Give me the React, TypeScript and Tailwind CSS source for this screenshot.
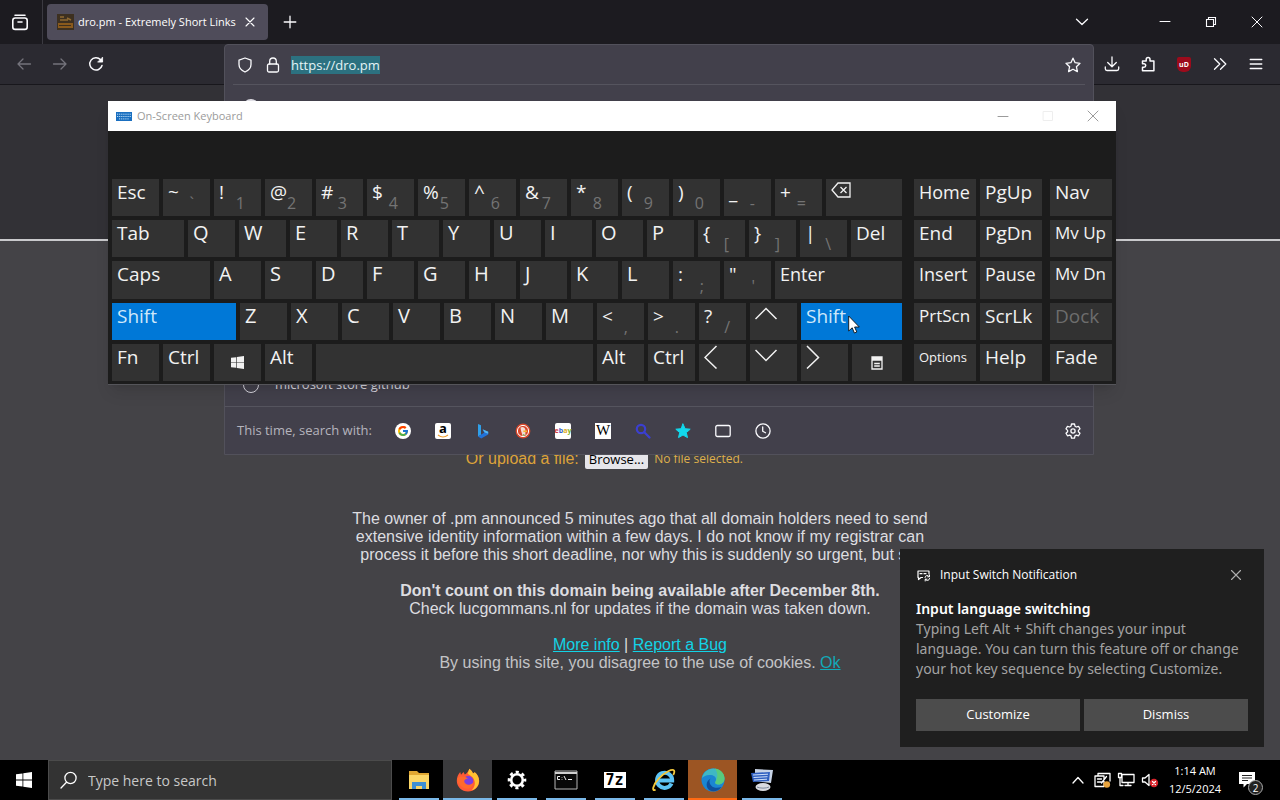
import React from "react";
import { FcGoogle } from "react-icons/fc";

type IconProps = { className?: string; children: React.ReactNode; box?: string };

function Icon({ className = "size-4", children, box = "0 0 16 16" }: IconProps) {
  return (
    <svg
      viewBox={box}
      className={`${className} shrink-0`}
      fill="none"
      stroke="currentColor"
      strokeWidth="1.3"
      strokeLinecap="round"
      strokeLinejoin="round"
      aria-hidden="true"
    >
      {children}
    </svg>
  );
}

const toolButton = "flex h-8 w-9 items-center justify-center";

/* ---------- Browser ---------- */

function TabStrip() {
  return (
    <div className="flex h-11 items-center bg-[#1c1b20]">
      <button aria-label="Firefox View" className="flex h-11 w-[43px] items-center justify-center border-r border-[#3b3a41] pr-[2px]">
        <Icon className="size-5" box="0 0 20 20">
          <g strokeWidth="1.6">
            <rect x="2.8" y="6" width="14.4" height="11.4" rx="2.4" />
            <path d="M5 3.2h10M8 10h4" />
          </g>
        </Icon>
      </button>
      <div className="ml-1 flex h-9 w-[221px] items-center rounded bg-[#4f4c5a] px-2 text-white">
        <svg viewBox="0 0 17 16" className="ml-[2px] mr-1 h-4 w-[17px] shrink-0" aria-hidden="true">
          <rect width="17" height="16" fill="#3d3020" />
          <path d="M1 9h15v5H1z" fill="#8a5a1c" />
          <path d="M3 3h4M3 6h8M10 4l4 2" stroke="#8f6a32" strokeWidth="1.4" />
          <path d="M2 11.5h12" stroke="#3d3020" strokeWidth="1" />
        </svg>
        <span className="flex-1 whitespace-nowrap text-[11px]">dro.pm - Extremely Short Links</span>
        <button aria-label="Close tab" className="mr-[2px] flex w-4 shrink-0 items-center justify-center">
          <Icon className="size-3" box="0 0 12 12">
            <path d="M2 2l8 8M10 2l-8 8" strokeWidth="1.1" />
          </Icon>
        </button>
      </div>
      <button aria-label="New tab" className="ml-1 flex size-9 items-center justify-center">
        <Icon>
          <path d="M8 2.2v11.6M2.2 8h11.6" />
        </Icon>
      </button>
      <div className="flex-1" />
      <button aria-label="List all tabs" className="flex size-9 items-center justify-center">
        <Icon>
          <path d="M2.5 5.3l5.5 5.2 5.5-5.2" />
        </Icon>
      </button>
      <div className="ml-[42px] flex">
        <button aria-label="Minimize" className="flex h-11 w-[46px] items-center justify-center">
          <Icon className="size-3" box="0 0 12 12">
            <path d="M1 5.5h10" strokeWidth="1" />
          </Icon>
        </button>
        <button aria-label="Restore" className="flex h-11 w-[46px] items-center justify-center">
          <Icon className="size-3" box="0 0 12 12">
            <path d="M1.5 3.5h7v7h-7zM3.5 3.5v-2h7v7h-2" strokeWidth="1.1" strokeLinejoin="miter" />
          </Icon>
        </button>
        <button aria-label="Close" className="flex h-11 w-[46px] items-center justify-center">
          <Icon className="size-3" box="0 0 12 12">
            <path d="M1 1l10 10M11 1L1 11" strokeWidth="1" />
          </Icon>
        </button>
      </div>
    </div>
  );
}

function EngineRow() {
  const slot = "flex size-5 items-center justify-center";
  return (
    <div className="flex h-12 items-center border-t border-[#55545e] pl-3 pr-[10px]">
      <span className="w-[156px] text-[13px] text-[#b5b4bd]">This time, search with:</span>
      <div className="flex flex-1 gap-5">
        <button aria-label="Google" className={slot}>
          <span className="flex size-4 items-center justify-center rounded-full bg-white">
            <FcGoogle className="size-3" />
          </span>
        </button>
        <button aria-label="Amazon" className={slot}>
          <span className="flex size-4 flex-col items-center rounded-xs bg-white text-black">
            <span className="h-[11px] text-[13px] leading-[10px] font-bold">a</span>
            <svg viewBox="0 0 12 4" className="h-1 w-3" aria-hidden="true">
              <path d="M1 1c3 2.4 7 2.4 10 0" stroke="#f0a030" fill="none" strokeWidth="1.2" />
            </svg>
          </span>
        </button>
        <button aria-label="Bing" className={slot}>
          <svg viewBox="0 0 16 16" className="size-4" aria-hidden="true">
            <path d="M3 1l3 1.2v9.6L3 13.6z" fill="#2f9fe8" />
            <path d="M3 13.4l3.2-2 3-1.6-1.6-3.4 5.6 2.4v2.6L6.2 15.4z" fill="#2272d8" />
            <path d="M7.6 6.2l5.6 2.5v2.1l-3.4-1.2z" fill="#56b8f0" />
          </svg>
        </button>
        <button aria-label="DuckDuckGo" className={slot}>
          <svg viewBox="0 0 16 16" className="size-4" aria-hidden="true">
            <circle cx="8" cy="8" r="7.4" fill="#d9482b" />
            <circle cx="8" cy="8" r="5.6" fill="none" stroke="#fff" strokeWidth="1" />
            <path d="M5.5 4.5C7.500 3 10.200 4.500 10.400 7v5L7.600 13C7 10 5.800 8 5.500 4.500z" fill="#f3dcd4" />
            <path d="M8.300 7.500h3.800v1.600H8.300z" fill="#f5b731" />
            <path d="M8 11l3.200 1.600H7.800z" fill="#5eb146" />
          </svg>
        </button>
        <button aria-label="eBay" className={slot}>
          <span className="flex size-4 items-center justify-center rounded-xs bg-white text-[7px] leading-none font-bold">
            <span className="text-[#d33a3a]">e</span>
            <span className="text-[#3c62c9]">b</span>
            <span className="text-[#e0a920]">a</span>
            <span className="text-[#7fb32a]">y</span>
          </span>
        </button>
        <button aria-label="Wikipedia" className={slot}>
          <span className="flex size-4 items-center justify-center overflow-hidden bg-white font-['Liberation_Serif',serif] text-[15px] leading-none text-black">
            W
          </span>
        </button>
        <button aria-label="Site search" className={`${slot} text-[#3b3fd0]`}>
          <Icon>
            <g strokeWidth="2.200">
              <circle cx="6" cy="6" r="4.200" />
              <path d="M9.300 9.300l5.200 5.200" />
            </g>
          </Icon>
        </button>
        <button aria-label="Bookmarks" className={`${slot} text-[#12d8ec]`}>
          <Icon>
            <path
              d="M8 1l2.100 4.700 5.100.5-3.900 3.400 1.200 5L8 12l-4.500 2.600 1.200-5L.8 6.200l5.100-.5z"
              fill="currentColor"
              strokeWidth="1"
            />
          </Icon>
        </button>
        <button aria-label="Tabs" className={slot}>
          <Icon>
            <rect x=".8" y="2.500" width="14.400" height="11" rx="1.600" />
          </Icon>
        </button>
        <button aria-label="History" className={slot}>
          <Icon>
            <circle cx="8" cy="8" r="7.100" />
            <path d="M7.700 4v4.300l2.800 1.500" />
          </Icon>
        </button>
      </div>
      <button aria-label="Search settings" className={slot}>
        <Icon>
          <path d="M6.500 1h3l.5 2.200 1.400.8 2.100-.7 1.500 2.600-1.600 1.500v1.300l1.600 1.500-1.500 2.600-2.100-.7-1.400.8-.5 2.200h-3L6 12.900l-1.400-.8-2.100.7L1 10.200l1.600-1.500V7.400L1 5.900l1.500-2.600 2.100.7L6 3.200z" />
          <circle cx="8" cy="8" r="2.100" />
        </Icon>
      </button>
    </div>
  );
}

function UrlBar() {
  return (
    <div className="relative h-10 flex-1">
      <div className="absolute inset-x-0 top-0 z-10 flex flex-col rounded-t-sm border border-[#52515b] bg-[#42404b]">
        <div className="flex h-[39px] items-center pl-1 pr-[10px]">
          <button aria-label="Tracking protection" className="flex w-8 items-center justify-center">
            <Icon>
              <path d="M8 1l6 2.200v4.200c0 3.600-2.600 6-6 7.600-3.400-1.600-6-4-6-7.600V3.200z" />
            </Icon>
          </button>
          <button aria-label="Site information" className="flex w-6 items-center justify-center">
            <Icon>
              <rect x="2.500" y="7" width="11" height="8" rx="1.500" />
              <path d="M4.700 7V4.300a3.300 3.300 0 0 1 6.600 0V7" />
            </Icon>
          </button>
          <div className="flex flex-1 pl-[6px]">
            <span className="bg-[#2c7180] text-[13px] leading-[18px] text-[#e4f4f6]">https://dro.pm</span>
          </div>
          <button aria-label="Bookmark this page" className="flex size-5 items-center justify-center">
            <Icon>
              <path d="M8 1.200l2.100 4.500 4.900.6-3.600 3.400 1 4.900L8 12.200l-4.400 2.400 1-4.900L1 6.300l4.900-.6z" />
            </Icon>
          </button>
        </div>
        <ul className="mx-2 flex h-[322px] flex-col justify-between border-t border-[#55545e] pt-[14px] pb-[13px] text-[13px]">
          <li className="flex h-4 items-center gap-4 pl-[10px]">
            <span className="size-4 rounded-full border-2 border-[#e0dfe6] bg-[#e0dfe6]" />
          </li>
          <li className="flex h-4 items-center gap-4 pl-[10px] text-[#d5d4dc]">
            <span className="size-4 rounded-full border border-[#d5d4dc]" />
            <span>microsoft store github</span>
          </li>
        </ul>
        <EngineRow />
      </div>
    </div>
  );
}

function Toolbar() {
  return (
    <div className="flex h-[41px] items-start border-b border-[#18171c] bg-[#2b2a31]">
      <div className="flex h-10 w-56 items-center pl-[6px]">
        <button aria-label="Back" className={`${toolButton} text-[#74737b]`}>
          <Icon>
            <path d="M14.500 8H2M7 3L2 8l5 5" />
          </Icon>
        </button>
        <button aria-label="Forward" className={`${toolButton} text-[#74737b]`}>
          <Icon>
            <path d="M1.500 8H14M9 3l5 5-5 5" />
          </Icon>
        </button>
        <button aria-label="Reload" className={toolButton}>
          <Icon>
            <path d="M14 9.500A6.200 6.200 0 1 1 12.600 3.700L14 5.300" strokeWidth="1.500" />
            <path d="M14.600 1.500v4.600H10z" fill="currentColor" strokeWidth=".8" />
          </Icon>
        </button>
      </div>
      <UrlBar />
      <div className="flex h-10 items-center pr-[6px]">
        <button aria-label="Downloads" className={toolButton}>
          <Icon>
            <path d="M8 1v9.500M3.700 6.500L8 10.700l4.300-4.200M1.300 11v1.800c0 1 .7 1.700 1.700 1.700h10c1 0 1.700-.7 1.700-1.700V11" />
          </Icon>
        </button>
        <button aria-label="Extensions" className={toolButton}>
          <Icon>
            <path
              d="M2.500 5h3.700V3.400a1.900 1.900 0 0 1 3.800 0V5h3.900v9.800H2.500v-3.600H4a1.700 1.700 0 0 0 0-3.400H2.500z"
              strokeWidth="1.500"
            />
          </Icon>
        </button>
        <button aria-label="uBlock Origin" className={toolButton}>
          <span className="flex h-[15px] w-[14px] items-center justify-center rounded-t-xs rounded-b-md bg-[#9c0b1c] text-[7px] leading-none font-bold text-white">
            uD
          </span>
        </button>
        <button aria-label="More tools" className={toolButton}>
          <Icon>
            <path d="M2.500 2.700L7.800 8l-5.300 5.300M8.500 2.700L13.800 8l-5.300 5.300" />
          </Icon>
        </button>
        <button aria-label="Application menu" className={toolButton}>
          <Icon>
            <path d="M2.200 3.500h11.600M2.200 8h11.600M2.200 12.500h11.600" />
          </Icon>
        </button>
      </div>
    </div>
  );
}

function SitePage() {
  return (
    <main className="flex flex-1 flex-col bg-[#444347] font-['Liberation_Sans',Arial,sans-serif] text-[16px] leading-[18px] text-[#dddde0]">
      <header className="h-[156px] border-b-2 border-[#c9c9cc] bg-[#323136]" />
      <div className="flex items-center justify-center gap-[6px] pt-[208px]">
        <label htmlFor="upload" className="flex items-center gap-[6px] text-[#dda23a]">
          Or upload a file:
          <span className="h-5 rounded-xs bg-[#e6e5ea] px-1 font-['Open_Sans',sans-serif] text-[13px] leading-5 text-black">
            Browse...
          </span>
        </label>
        <input id="upload" type="file" className="sr-only" />
        <span className="w-40 font-['Open_Sans',sans-serif] text-[12px] text-[#dfb04c]">No file selected.</span>
      </div>
      <div className="flex flex-col items-center gap-[18px] pt-[41px] text-center">
        <p>
          The owner of .pm announced 5 minutes ago that all domain holders need to send
          <br />
          extensive identity information within a few days. I do not know if my registrar can
          <br />
          process it before this short deadline, nor why this is suddenly so urgent, but so.
        </p>
        <p>
          <strong>Don't count on this domain being available after December 8th.</strong>
          <br />
          Check lucgommans.nl for updates if the domain was taken down.
        </p>
        <div>
          <p>
            <a href="#info" className="text-[#12d3e6] underline">More info</a> |{" "}
            <a href="#bug" className="text-[#12d3e6] underline">Report a Bug</a>
          </p>
          <p className="text-[#c3c3c6]">
            By using this site, you disagree to the use of cookies.{" "}
            <a href="#ok" className="text-[#12a9b8] underline">Ok</a>
          </p>
        </div>
      </div>
    </main>
  );
}

/* ---------- On-screen keyboard ---------- */

type KeyDef = {
  label?: string;
  alt?: string;
  name?: string;
  icon?: React.ReactNode;
  center?: boolean;
  width?: string;
  active?: boolean;
  muted?: boolean;
  size?: string;
};

const k = (label: string, alt?: string): KeyDef => ({ label, alt });
const letters = (s: string): KeyDef[] => s.split("").map((c) => ({ label: c, size: "text-[20px]" }));
const grow = "flex-1";

const chevron = (d: string) => (
  <svg viewBox="0 0 24 24" className="size-6 shrink-0" fill="none" stroke="currentColor" strokeWidth="1.500" aria-hidden="true">
    <path d={d} />
  </svg>
);

function WindowsLogo({ className }: { className: string }) {
  return (
    <svg viewBox="0 0 16 16" className={className} fill="currentColor" aria-hidden="true">
      <path d="M0 2.300L6.500 1.400v6.200H0zM7.300 1.300L16 0v7.600H7.300zM0 8.400h6.500v6.200L0 13.700zM7.300 8.400H16V16l-8.700-1.300z" />
    </svg>
  );
}

const mainRows: KeyDef[][] = [
  [
    k("Esc"), k("~", "`"), k("!", "1"), k("@", "2"), k("#", "3"), k("$", "4"), k("%", "5"), k("^", "6"),
    k("&", "7"), k("*", "8"), k("(", "9"), k(")", "0"), k("_", "-"), k("+", "="),
    {
      name: "Backspace",
      width: grow,
      icon: (
        <svg viewBox="0 0 20 24" className="h-6 w-5" fill="none" stroke="currentColor" strokeWidth="1.300" aria-hidden="true">
          <path d="M7 3h12v14H7l-6-7zM9.500 7l6 6M15.500 7l-6 6" />
        </svg>
      ),
    },
  ],
  [{ label: "Tab", width: "w-[72px]" }, ...letters("QWERTYUIOP"), k("{", "["), k("}", "]"), k("|", "\\"), { label: "Del", width: grow }],
  [{ label: "Caps", width: "w-[98px]" }, ...letters("ASDFGHJKL"), k(":", ";"), k('"', "'"), { label: "Enter", width: grow, size: "text-[18px]" }],
  [
    { label: "Shift", width: "w-[124px]", active: true },
    ...letters("ZXCVBNM"), k("<", ","), k(">", "."), k("?", "/"),
    { name: "Up", icon: chevron("M.5 15L11 4.500 21.500 15") },
    { label: "Shift", width: grow, active: true },
  ],
  [
    k("Fn"), k("Ctrl"),
    { name: "Windows", center: true, icon: <WindowsLogo className="size-[13px]" /> },
    k("Alt"),
    { name: "Space", width: grow },
    k("Alt"), k("Ctrl"),
    { name: "Left", icon: chevron("M12.500 1L1 12.500 12.500 23.500") },
    { name: "Down", icon: chevron("M.5 5L11 15.500 21.500 5") },
    { name: "Right", icon: chevron("M1 1l11.500 11.500L1 23.500") },
    {
      name: "Menu",
      center: true,
      width: "w-[50px]",
      icon: (
        <svg viewBox="0 0 12 14" className="h-[14px] w-3" fill="none" stroke="currentColor" strokeWidth="1.300" aria-hidden="true">
          <path d="M1 1h10v12H1zM1 2.500h10M1 4h10M3.200 7.500h5.600M3.200 10h5.600" />
        </svg>
      ),
    },
  ],
];

const navKeys: KeyDef[] = [
  { label: "Home", size: "text-[18px]" }, k("PgUp"),
  k("End"), k("PgDn"),
  { label: "Insert", size: "text-[18px]" }, { label: "Pause", size: "text-[18px]" },
  { label: "PrtScn", size: "text-[17px]" }, k("ScrLk"),
  { label: "Options", size: "text-[13px]" }, k("Help"),
];

const paneKeys: KeyDef[] = [
  k("Nav"),
  { label: "Mv Up", size: "text-[17px]" },
  { label: "Mv Dn", size: "text-[17px]" },
  { label: "Dock", muted: true },
  k("Fade"),
];

function Key({ def }: { def: KeyDef }) {
  const tone = def.active ? "bg-[#0078d7] text-[#cfe8fa]" : def.muted ? "bg-[#323232] text-[#6d6d6d]" : "bg-[#323232] text-[#f2f2f2]";
  const place = def.center ? "items-center justify-center" : "items-start";
  return (
    <button
      aria-label={def.name}
      className={`flex h-full ${def.width ?? "w-[47px]"} ${place} ${tone} px-[5px] pt-px leading-6 ${def.size ?? "text-[19px]"}`}
    >
      {def.icon}
      {def.label && <span>{def.label}</span>}
      {def.alt && <span className="flex-1 self-end pr-[11px] text-right text-[16px] leading-[26px] text-[#747474]">{def.alt}</span>}
    </button>
  );
}

function KeyboardWindow() {
  return (
    <section
      aria-label="On-Screen Keyboard"
      className="absolute top-[101px] left-[108px] z-20 w-[1008px] border-b border-[#55555a] bg-[#1c1c1c] shadow-lg"
    >
      <div className="flex h-[30px] items-center bg-white pl-2 text-[#9b9b9b]">
        <svg viewBox="0 0 16 9" className="h-[9px] w-4" aria-hidden="true">
          <rect width="16" height="9" fill="#1a6fc0" />
          <path d="M1 2.200h14M1 4.500h14M3 6.900h10" stroke="#bcdcf5" strokeDasharray="1.200 .9" />
        </svg>
        <h2 className="flex-1 pl-[5px] text-[11px]">On-Screen Keyboard</h2>
        <button aria-label="Minimize keyboard" className="flex w-[45px] justify-center">
          <Icon className="size-3" box="0 0 12 12"><path d="M1 6.500h10" strokeWidth="1" /></Icon>
        </button>
        <button aria-label="Maximize keyboard" className="flex w-[45px] justify-center text-[#eeeeee]" disabled>
          <Icon className="size-3" box="0 0 12 12"><path d="M1.500 1.500h9v9h-9z" strokeWidth="1" /></Icon>
        </button>
        <button aria-label="Close keyboard" className="flex w-[46px] justify-center">
          <Icon className="size-3" box="0 0 12 12"><path d="M1 1l10 10M11 1L1 11" strokeWidth="1" /></Icon>
        </button>
      </div>
      <div className="flex h-[253px] px-1 pt-12 pb-[3px]">
        <div className="grid flex-1 auto-rows-fr gap-1">
          {mainRows.map((row, i) => (
            <div key={i} className="flex gap-1">
              {row.map((def, j) => <Key key={j} def={def} />)}
            </div>
          ))}
        </div>
        <div className="ml-3 grid w-32 auto-rows-fr grid-cols-2 gap-1">
          {navKeys.map((def) => <Key key={def.label} def={{ ...def, width: "w-full" }} />)}
        </div>
        <div className="ml-2 grid w-[62px] auto-rows-fr gap-1">
          {paneKeys.map((def) => <Key key={def.label} def={{ ...def, width: "w-full" }} />)}
        </div>
      </div>
    </section>
  );
}

/* ---------- Notification ---------- */

function Toast() {
  return (
    <aside className="absolute right-4 bottom-[53px] z-20 w-[364px] bg-[#1f1f1f] p-4 text-white">
      <div className="flex h-5 items-center">
        <Icon className="size-4">
          <g strokeWidth="1.200">
            <path d="M6.500 10.500H5l-2.500 2v-2h-.5V4h11v3M4 6.700h2M8 6.700h2" />
            <path d="M9 10.500a2.300 2.300 0 0 1 4.300-.8M13.600 11.500a2.300 2.300 0 0 1-4.200.9M13.500 8v1.800h-1.800M9.200 14v-1.800H11" strokeWidth="1" />
          </g>
        </Icon>
        <h2 className="flex-1 pl-2 text-[12px]">Input Switch Notification</h2>
        <button aria-label="Close notification" className="flex size-6 items-center justify-center text-[#b0b0b0]">
          <Icon className="size-3" box="0 0 12 12"><path d="M1.500 1.500l9 9M10.500 1.500l-9 9" strokeWidth="1.100" /></Icon>
        </button>
      </div>
      <div className="mt-[14px] font-['Noto_Sans',sans-serif] text-[14px] leading-5">
        <h3 className="font-semibold">Input language switching</h3>
        <p className="text-[#a3a3a3]">
          Typing Left Alt + Shift changes your input
          <br />
          language. You can turn this feature off or change
          <br />
          your hot key sequence by selecting Customize.
        </p>
      </div>
      <div className="mt-5 grid grid-cols-2 gap-1 text-[13px]">
        <button className="h-8 bg-[#4c4c4c]">Customize</button>
        <button className="h-8 bg-[#4c4c4c]">Dismiss</button>
      </div>
    </aside>
  );
}

/* ---------- Taskbar ---------- */

type TaskApp = { name: string; icon: React.ReactNode; tone?: string; bar?: string };

const apps: TaskApp[] = [
  {
    name: "File Explorer",
    icon: (
      <svg viewBox="0 0 24 24" className="size-6" aria-hidden="true">
        <path d="M2 3h8l2 2h10v16H2z" fill="#e0a732" />
        <path d="M2 7h20v14H2z" fill="#fbd667" />
        <path d="M5 21v-7h14v7h-4v-3H9v3z" fill="#3f8fd2" />
      </svg>
    ),
  },
  {
    name: "Firefox",
    tone: "bg-[#3b3b3d]",
    icon: (
      <svg viewBox="0 0 24 24" className="size-6" aria-hidden="true">
        <path d="M12 23.500C5.800 23.500.8 18.800.8 13c0-3.600 1.200-6.500 3.400-9l.8 2.800L7.500 4l1.300 2.400C10.500 6 12 4 13.400.8c2 1.500 3 3 3.600 4.700l1.800-1.300c2.900 2.300 4.500 5.600 4.400 9.100-.1 5.800-5 10.200-11.200 10.200z" fill="#ff5a36" />
        <path d="M13.400.8c2 1.500 3 3 3.600 4.700l1.800-1.300c4 3.200 5.300 8.300 3.400 12.800-2 3.500-4 4.600-6.600 5.200 3.300-3.300 4.300-7.500 2-11.500-1.600-2.900-5-3.700-6-5.200z" fill="#ffc130" />
        <circle cx="12.300" cy="13" r="5" fill="#7a3ee0" />
        <path d="M1.500 10c3-2.300 7.700-1.600 10.500.5-1.500.1-3.500 1-3.800 2.600 0 3.300 5 5.500 9 1.600-.6 5-4.300 6.300-7 5.900-4.400-.6-9-5-8.700-10.600z" fill="#ff6a2c" />
      </svg>
    ),
  },
  {
    name: "Settings",
    icon: (
      <svg viewBox="0 0 24 24" className="size-6" fill="none" stroke="#fff" aria-hidden="true">
        <circle cx="12" cy="12" r="5.800" strokeWidth="2.600" />
        <circle cx="12" cy="12" r="8" strokeWidth="2.600" strokeDasharray="3.140 3.143" strokeDashoffset="1.570" />
      </svg>
    ),
  },
  {
    name: "Command Prompt",
    icon: (
      <svg viewBox="0 0 24 20" className="h-5 w-6" fill="none" aria-hidden="true">
        <path d="M1 1h22v18H1z" fill="#080808" stroke="#b5b5b5" />
        <path d="M1 3h22" stroke="#d0d0d0" strokeWidth="2" />
        <path d="M6 6.500H3.500v3H6M8 7v.6M8 9v.6M10 6l2 4M14 9.500h4" stroke="#f0f0f0" />
      </svg>
    ),
  },
  {
    name: "7-Zip",
    icon: (
      <span className="flex h-4 w-[22px] items-center justify-center border border-white bg-white font-['DejaVu_Sans_Mono',monospace] text-[15px] leading-none font-bold text-black">
        7z
      </span>
    ),
  },
  {
    name: "Internet Explorer",
    icon: (
      <svg viewBox="0 0 24 24" className="size-6" fill="none" aria-hidden="true">
        <path d="M19.500 15.500A7.600 7.600 0 1 1 20.200 12.600H6" stroke="#5cc3f5" strokeWidth="4" />
        <path d="M3.500 21.500C-.5 24.500.5 17 7 10.300 13 4 20.500.3 22 2.500c.7 1.200.3 2.700-.8 4.500" stroke="#f3c83c" strokeWidth="1.800" />
      </svg>
    ),
  },
  {
    name: "Edge",
    tone: "bg-[#9c5523]",
    bar: "bg-[#ff6a13]",
    icon: (
      <svg viewBox="0 0 24 24" className="size-6" aria-hidden="true">
        <circle cx="12" cy="12" r="11.500" fill="#1b86d2" />
        <path d="M1 10C2.500 4 7 .5 12.500.5c6 0 11 4.500 11 10 0 3.500-2.500 6-6 6-2.500 0-4-1-3-3 1.500-2.500 0-6-4.500-6.500C6 6.500 2.500 8 1 10z" fill="#3fb8c4" />
        <path d="M14 .6c6 .6 9.500 5.500 9.500 9.900 0 3.500-2.500 6-6 6-2.500 0-4-1-3-3C17 10 17 5 14 .6z" fill="#5fd06c" opacity=".8" />
        <path d="M8.500 13c0 5 4.500 8.500 12 6-4 5.500-11.500 5.500-14 1-2-3.500-.5-8 3.500-9.500-.9.600-1.500 1.300-1.500 2.500z" fill="#0f4f9c" />
      </svg>
    ),
  },
  {
    name: "Keyboard utility",
    icon: (
      <svg viewBox="0 0 24 24" className="size-6" aria-hidden="true">
        <path d="M5 1l18 1-2 13-16-2z" fill="#c7d3e6" />
        <path d="M1 5l19-1-1 9-16 1z" fill="#2f5fc0" />
        <path d="M3 7l15-.8M3.500 9.500l14-.8M4 12l13-.8" stroke="#cfe0fa" strokeWidth="1" />
        <ellipse cx="13" cy="19" rx="7.500" ry="4" fill="#d9dbe0" />
        <path d="M7 19c3 1.500 9 1.500 12 0" stroke="#7f8a9c" fill="none" />
      </svg>
    ),
  },
];

function Taskbar() {
  return (
    <footer className="flex h-10 shrink-0 items-stretch bg-black text-white">
      <button aria-label="Start" className="flex w-12 items-center justify-center">
        <WindowsLogo className="size-4" />
      </button>
      <label className="flex w-[344px] items-center border border-[#4b4b4b] bg-[#333333] pl-[11px]">
        <Icon className="size-[18px]" box="0 0 18 18">
          <circle cx="10.500" cy="7" r="5.600" />
          <path d="M6.500 11.200L1 17" />
        </Icon>
        <input
          type="text"
          aria-label="Type here to search"
          placeholder="Type here to search"
          className="h-full w-full bg-transparent pl-[10px] text-[14px] leading-7 text-[#c8c8c8] outline-none placeholder:text-[#c8c8c8]"
        />
      </label>
      <nav className="ml-[2px] flex">
        {apps.map((app) => (
          <button
            key={app.name}
            aria-label={app.name}
            className={`flex w-[49px] flex-col items-center ${app.tone ?? ""}`}
          >
            <span className="flex flex-1 items-center pt-[2px]">{app.icon}</span>
            <span className={`h-[2px] ${app.tone ? "w-full" : "w-10"} ${app.bar ?? "bg-[#7ab8e8]"}`} />
          </button>
        ))}
      </nav>
      <div className="flex-1" />
      <div className="flex items-center">
        <button aria-label="Show hidden icons" className="flex w-6 justify-center">
          <Icon className="size-3" box="0 0 12 12"><path d="M1 9l5-5.500L11 9" /></Icon>
        </button>
        <button aria-label="Input tool" className="flex w-6 justify-center">
          <Icon className="size-[18px]" box="0 0 18 18">
            <path d="M5 5V2.500h12V10M2 5h9v10.500H2zM4.500 8h4M4.500 11h4M13.500 5.500L8.500 12" />
            <circle cx="13.800" cy="13.500" r="3.300" fill="#e8a33d" stroke="none" />
          </Icon>
        </button>
        <button aria-label="Network" className="flex w-6 justify-center">
          <Icon className="size-[18px]" box="0 0 18 18">
            <path d="M5 3.500h12v8H5zM11 11.500v3M8 14.500h6M1.500 2.500h3v4h-3zM3 6.500v8h3" />
          </Icon>
        </button>
        <button aria-label="Volume muted" className="flex w-6 justify-center">
          <Icon className="size-[18px]" box="0 0 18 18">
            <path d="M1.500 7h2.500l4-3.500v11L4 11H1.500z" />
            <circle cx="13" cy="12" r="4.200" fill="#d8232a" stroke="none" />
            <path d="M11.500 10.500l3 3M14.500 10.500l-3 3" />
          </Icon>
        </button>
        <time className="w-[66px] text-center text-[11px] leading-[18px]">
          1:14 AM
          <br />
          12/5/2024
        </time>
        <button aria-label="Notifications, 2 new" className="relative flex h-10 w-[52px] items-center justify-center pr-[14px]">
          <svg viewBox="0 0 18 18" className="size-[18px]" aria-hidden="true">
            <path d="M1 1h16v12H9l-3.500 3.500V13H1z" fill="#fff" />
            <path d="M4 4.500h10M4 7h10M4 9.500h6" stroke="#222" />
          </svg>
          <span className="absolute right-[17px] bottom-[5px] flex size-[15px] items-center justify-center rounded-full border border-[#aaaaaa] bg-[#222222] text-[10px] leading-none">
            2
          </span>
        </button>
      </div>
    </footer>
  );
}

export default function App() {
  return (
    <div className="relative flex min-h-screen flex-col overflow-hidden bg-black font-['Open_Sans','Noto_Sans',sans-serif] text-[#fbfbfe]">
      <TabStrip />
      <Toolbar />
      <SitePage />
      <KeyboardWindow />
      <Toast />
      <Taskbar />
      <svg viewBox="0 0 12 19" className="pointer-events-none absolute top-[315px] left-[848px] z-30 h-[19px] w-3" aria-hidden="true">
        <path d="M.7 1v15l3.500-3.200L6.400 18l2.400-1-2.200-5h4.700z" fill="#fff" stroke="#111" strokeWidth=".9" />
      </svg>
    </div>
  );
}
